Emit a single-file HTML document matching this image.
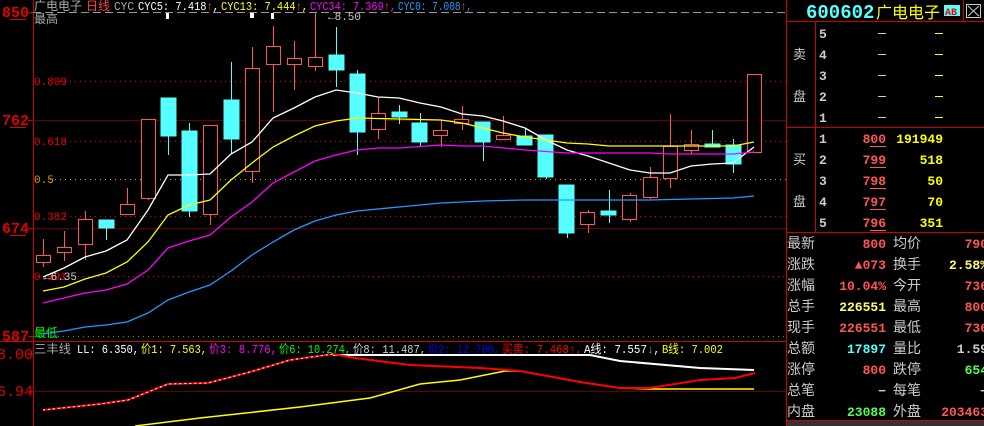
<!DOCTYPE html>
<html><head><meta charset="utf-8"><style>
html,body{margin:0;padding:0;background:#000;width:984px;height:426px;overflow:hidden}
svg{display:block}
text{font-family:"Liberation Mono","Noto Sans CJK SC",monospace;}
.cn{font-family:"Liberation Sans","Noto Sans CJK SC",sans-serif}
</style></head><body>
<svg width="984" height="426" viewBox="0 0 984 426" xmlns="http://www.w3.org/2000/svg">
<rect width="984" height="426" fill="#000"/>
<line x1="33.5" y1="0" x2="33.5" y2="426" stroke="#c00"/>
<line x1="786.5" y1="0" x2="786.5" y2="426" stroke="#c00"/>
<line x1="33" y1="12.5" x2="786" y2="12.5" stroke="#999" stroke-dasharray="8,4"/>
<line x1="33" y1="120.5" x2="786" y2="120.5" stroke="#600"/>
<line x1="33" y1="228.5" x2="786" y2="228.5" stroke="#600"/>
<line x1="33" y1="336.5" x2="786" y2="336.5" stroke="#0c0" stroke-dasharray="1,4"/>
<line x1="0" y1="341.5" x2="786" y2="341.5" stroke="#c00"/>
<line x1="33" y1="391.5" x2="786" y2="391.5" stroke="#600"/>
<g stroke-dasharray="1,4">
<line x1="60" y1="81.5" x2="786" y2="81.5" stroke="#e00"/>
<line x1="65" y1="141.5" x2="786" y2="141.5" stroke="#e00"/>
<line x1="50" y1="179.5" x2="786" y2="179.5" stroke="#e90"/>
<line x1="65" y1="216.5" x2="786" y2="216.5" stroke="#e00"/>
<line x1="33" y1="276.5" x2="786" y2="276.5" stroke="#e00"/>
</g>
<g fill="#e00" font-size="11">
<text x="34" y="85">0.809</text><text x="34" y="145">0.618</text>
<text x="34" y="183" fill="#e90">0.5</text><text x="34" y="220">0.382</text><text x="34" y="280">0.191</text>
</g>
<text x="44" y="280" fill="#ccc" font-size="11">←6.35</text>
<text x="328" y="20" fill="#ccc" font-size="11">←8.50</text>
<g stroke="#c00"><line x1="28" y1="12.5" x2="33" y2="12.5"/><line x1="28" y1="120.5" x2="33" y2="120.5"/><line x1="28" y1="228.5" x2="33" y2="228.5"/><line x1="28" y1="336.5" x2="33" y2="336.5"/><line x1="28" y1="354.5" x2="33" y2="354.5"/><line x1="28" y1="391.5" x2="33" y2="391.5"/></g>
<g fill="#d00" font-size="15" font-weight="bold" font-family="Liberation Sans">
<text x="2" y="17">850</text><text x="2" y="125">762</text><text x="2" y="233">674</text><text x="2" y="341">587</text>
<text x="-3" y="359" font-weight="normal">8.00</text><text x="-3" y="396" font-weight="normal">6.94</text>
</g>
<g stroke="#d00"><line x1="10" y1="19.5" x2="26" y2="19.5"/><line x1="10" y1="127.5" x2="26" y2="127.5"/><line x1="10" y1="235.5" x2="26" y2="235.5"/></g>
<text x="34" y="23" class="cn" fill="#aaa" font-size="12">最高</text>
<text x="34" y="337" class="cn" fill="#0f0" font-size="12">最低</text>
<g font-size="12">
<text x="34" y="10" class="cn" fill="#aaa">广电电子</text>
<text x="86" y="10" class="cn" fill="#f44">日线</text>
<text x="114" y="10" fill="#aaa" textLength="20" lengthAdjust="spacingAndGlyphs">CYC</text>
<text x="138" y="10" fill="#fff" textLength="81" lengthAdjust="spacingAndGlyphs">CYC5: 7.418<tspan fill="#f44">↑</tspan>,</text>
<text x="221" y="10" fill="#ff0" textLength="87" lengthAdjust="spacingAndGlyphs">CYC13: 7.444<tspan fill="#f44">↑</tspan>,</text>
<text x="310" y="10" fill="#f0f" textLength="86" lengthAdjust="spacingAndGlyphs">CYC34: 7.369<tspan fill="#f44">↑</tspan>,</text>
<text x="398" y="10" fill="#29f" textLength="74" lengthAdjust="spacingAndGlyphs">CYC0: 7.008<tspan fill="#f44">↑</tspan>,</text>
</g>
<g fill="#fff"><rect x="166" y="13" width="3" height="6"/><rect x="250" y="13" width="4" height="5"/><rect x="271" y="13" width="3" height="6"/></g>
<g stroke="#f55" fill="none">
<line x1="43.5" y1="239" x2="43.5" y2="267"/><rect x="36.5" y="255.5" width="14" height="7" fill="#000"/>
<line x1="64.5" y1="231" x2="64.5" y2="261"/><rect x="57.5" y="247.5" width="14" height="5" fill="#000"/>
<line x1="85.5" y1="211" x2="85.5" y2="260"/><rect x="78.5" y="219.5" width="14" height="25" fill="#000"/>
<line x1="127.5" y1="188" x2="127.5" y2="214"/><rect x="120.5" y="204.5" width="14" height="10" fill="#000"/>
<line x1="148.5" y1="119" x2="148.5" y2="200"/><rect x="141.5" y="119.5" width="14" height="79" fill="#000"/>
<line x1="210.5" y1="125" x2="210.5" y2="225"/><rect x="203.5" y="125.5" width="14" height="89" fill="#000"/>
<line x1="252.5" y1="47" x2="252.5" y2="183"/><rect x="245.5" y="68.5" width="14" height="103" fill="#000"/>
<line x1="273.5" y1="26" x2="273.5" y2="112"/><rect x="266.5" y="46.5" width="14" height="18" fill="#000"/>
<line x1="294.5" y1="41" x2="294.5" y2="90"/><rect x="287.5" y="58.5" width="14" height="6" fill="#000"/>
<line x1="315.5" y1="13" x2="315.5" y2="71"/><rect x="308.5" y="57.5" width="14" height="9" fill="#000"/>
<line x1="378.5" y1="97" x2="378.5" y2="139"/><rect x="371.5" y="113.5" width="14" height="16" fill="#000"/>
<line x1="441.5" y1="120" x2="441.5" y2="147"/><rect x="433.5" y="130.5" width="14" height="5" fill="#000"/>
<line x1="462.5" y1="106" x2="462.5" y2="130"/><rect x="454.5" y="119.5" width="14" height="4" fill="#000"/>
<line x1="503.5" y1="116" x2="503.5" y2="140"/><rect x="496.5" y="135.5" width="14" height="4" fill="#000"/>
<line x1="588.5" y1="210" x2="588.5" y2="233"/><rect x="580.5" y="212.5" width="14" height="12" fill="#000"/>
<line x1="630.5" y1="193" x2="630.5" y2="222"/><rect x="622.5" y="195.5" width="14" height="24" fill="#000"/>
<line x1="650.5" y1="167" x2="650.5" y2="199"/><rect x="643.5" y="177.5" width="14" height="20" fill="#000"/>
<line x1="670.5" y1="114" x2="670.5" y2="188"/><rect x="663.5" y="146.5" width="14" height="32" fill="#000"/>
<line x1="691.5" y1="130" x2="691.5" y2="154"/><rect x="684.5" y="144.5" width="14" height="6" fill="#000"/>
<rect x="747.5" y="74.5" width="14" height="78" fill="#000"/>
</g>
<g stroke="#5ff" fill="#5ff">
<line x1="106.5" y1="220" x2="106.5" y2="240"/><rect x="99" y="220" width="15" height="8"/>
<line x1="168.5" y1="98" x2="168.5" y2="155"/><rect x="161" y="98" width="15" height="38"/>
<line x1="189.5" y1="123" x2="189.5" y2="217"/><rect x="182" y="131" width="15" height="80"/>
<line x1="231.5" y1="62" x2="231.5" y2="153"/><rect x="224" y="100" width="15" height="39"/>
<line x1="336.5" y1="27" x2="336.5" y2="87"/><rect x="329" y="55" width="15" height="15"/>
<line x1="357.5" y1="70" x2="357.5" y2="155"/><rect x="350" y="74" width="15" height="58"/>
<line x1="399.5" y1="105" x2="399.5" y2="124"/><rect x="392" y="112" width="15" height="5"/>
<line x1="420.5" y1="113" x2="420.5" y2="146"/><rect x="412" y="123" width="15" height="19"/>
<line x1="483.5" y1="122" x2="483.5" y2="161"/><rect x="475" y="122" width="15" height="20"/>
<line x1="525.5" y1="129" x2="525.5" y2="145"/><rect x="517" y="136" width="15" height="9"/>
<line x1="546.5" y1="135" x2="546.5" y2="179"/><rect x="538" y="135" width="15" height="42"/>
<line x1="567.5" y1="185" x2="567.5" y2="238"/><rect x="559" y="185" width="15" height="48"/>
<line x1="609.5" y1="190" x2="609.5" y2="223"/><rect x="601" y="211" width="15" height="4"/>
<line x1="712.5" y1="130" x2="712.5" y2="146"/><rect x="705" y="144" width="15" height="3"/>
<line x1="733.5" y1="139" x2="733.5" y2="173"/><rect x="726" y="145" width="15" height="19"/>
</g>
<g fill="none" stroke-width="1.3">
<polyline stroke="#fff" points="43,277 64,268 85,257 106,251 127,240 148,210 168,175 189,175 210,174 231,154 252,142 273,118 294,108 315,97 336,90 357,93 378,97 399,98 420,103 441,107 462,114 483,116 503,121 525,128 546,140 567,150 588,156 609,163 630,170 650,173 670,173 691,166 712,164 733,163 754,147"/>
<polyline stroke="#ff0" points="43,291 64,287 85,279 106,273 127,262 148,242 168,215 189,205 210,200 231,180 252,163 273,147 294,136 315,126 336,121 357,118 399,119 441,120 462,123 483,128 503,133 525,137 546,140 567,143 588,144 609,146 650,146 691,146 733,146 754,142"/>
<polyline stroke="#f0f" points="43,303 64,298 85,293 106,290 127,284 148,270 168,248 189,241 210,235 231,217 252,202 273,183 294,172 315,161 336,155 357,150 378,148 399,148 441,145 462,146 483,146 525,150 567,153 609,153 650,153 670,154 691,154 733,154 754,152"/>
<polyline stroke="#29f" points="43,334 64,331 85,327 106,325 127,322 148,313 168,300 189,292 210,285 231,271 252,255 273,242 294,230 315,221 336,215 357,211 378,209 399,207 441,203 483,201 525,200 567,200 609,200 650,200 691,199 733,198 754,196"/>
</g>
<g font-size="12">
<text x="34" y="353" class="cn" fill="#aaa" textLength="37" lengthAdjust="spacingAndGlyphs">三丰线</text>
<text x="77" y="353" fill="#fff" textLength="62" lengthAdjust="spacingAndGlyphs">LL: 6.350,</text>
<text x="141" y="353" fill="#ff0" textLength="66" lengthAdjust="spacingAndGlyphs">价1: 7.563,</text>
<text x="209" y="353" fill="#f0f" textLength="68" lengthAdjust="spacingAndGlyphs">价3: 8.776,</text>
<text x="279" y="353" fill="#0f0" textLength="72" lengthAdjust="spacingAndGlyphs">价6: 10.274,</text>
<text x="353" y="353" fill="#ccc" textLength="73" lengthAdjust="spacingAndGlyphs">价8: 11.487,</text>
<text x="428" y="353" fill="#00f" textLength="72" lengthAdjust="spacingAndGlyphs">价2: 12.700,</text>
<text x="502" y="353" fill="#f00" textLength="80" lengthAdjust="spacingAndGlyphs">买卖: 7.468↑,</text>
<text x="584" y="353" fill="#fff" textLength="76" lengthAdjust="spacingAndGlyphs">A线: 7.557<tspan fill="#0f0">↓</tspan>,</text>
<text x="662" y="353" fill="#ff0" textLength="61" lengthAdjust="spacingAndGlyphs">B线: 7.002</text>
</g>
<g fill="none" stroke-width="2">
<polyline stroke="#fff" points="333,355 590,355 620,361 700,368 754,370"/>
<polyline stroke="#ff0" stroke-width="1.5" points="135,426 200,418 300,407 370,398 420,384 460,380 505,371 520,371 580,382 620,388 650,389 754,389"/>
<polyline stroke="#f00" points="43,410 100,404 128,400 168,384 208,383 250,372 290,360 333,354 355,358 410,365 480,368 520,371 580,382 620,388 650,388 700,380 735,378 755,373"/>
<polyline stroke="#fff" stroke-width="1" stroke-dasharray="2,3" points="43,410 100,404 128,400 168,384 208,383 250,372 290,360 333,354"/>
</g>
<g stroke="#c00" fill="none">
<line x1="786" y1="21.5" x2="984" y2="21.5"/>
<line x1="786" y1="127.5" x2="984" y2="127.5"/>
<line x1="786" y1="232.5" x2="984" y2="232.5"/>
<line x1="815.5" y1="21" x2="815.5" y2="232"/>
<line x1="963.5" y1="0" x2="963.5" y2="21"/>
<line x1="786" y1="420.5" x2="984" y2="420.5"/>
</g>
<rect x="787" y="421" width="197" height="5" fill="#333"/>
<text x="806" y="18" fill="#5ff" font-size="19" font-weight="bold" font-family="Liberation Sans">600602</text>
<text x="876" y="18" class="cn" fill="#ff0" font-size="16">广电电子</text>
<rect x="944" y="5" width="16" height="11" fill="#5ff"/><text x="945" y="15" fill="#f00" font-size="10" font-weight="bold" font-family="Liberation Sans">AB</text>
<rect x="966.5" y="4.5" width="14" height="13" fill="none" stroke="#ccc"/><path d="M968 6 L979 16 M979 6 L968 16" stroke="#ccc"/>
<g font-size="13" class="cn" fill="#ccc"><text x="793" y="59">卖</text><text x="793" y="101">盘</text><text x="793" y="164">买</text><text x="793" y="206">盘</text></g>
<g font-size="13" font-family="Liberation Sans" fill="#ccc" font-weight="bold">
<text x="819" y="38">5</text><text x="819" y="59">4</text><text x="819" y="80">3</text><text x="819" y="101">2</text><text x="819" y="122">1</text>
<text x="819" y="143">1</text><text x="819" y="164">2</text><text x="819" y="185">3</text><text x="819" y="206">4</text><text x="819" y="227">5</text>
</g>
<g stroke="#ccc"><line x1="878" y1="33.5" x2="886" y2="33.5"/><line x1="878" y1="54.5" x2="886" y2="54.5"/><line x1="878" y1="75.5" x2="886" y2="75.5"/><line x1="878" y1="96.5" x2="886" y2="96.5"/><line x1="878" y1="117.5" x2="886" y2="117.5"/></g>
<g stroke="#ff0"><line x1="935" y1="33.5" x2="943" y2="33.5"/><line x1="935" y1="54.5" x2="943" y2="54.5"/><line x1="935" y1="75.5" x2="943" y2="75.5"/><line x1="935" y1="96.5" x2="943" y2="96.5"/><line x1="935" y1="117.5" x2="943" y2="117.5"/></g>
<g font-size="13" font-family="Liberation Sans" font-weight="bold" text-anchor="end">
<g fill="#f55"><text x="886" y="143">800</text><text x="886" y="164">799</text><text x="886" y="185">798</text><text x="886" y="206">797</text><text x="886" y="227">796</text></g>
<g fill="#ff0"><text x="943" y="143">191949</text><text x="943" y="164">518</text><text x="943" y="185">50</text><text x="943" y="206">70</text><text x="943" y="227">351</text></g>
</g>
<g stroke="#f55"><line x1="870" y1="146.5" x2="886" y2="146.5"/><line x1="870" y1="167.5" x2="886" y2="167.5"/><line x1="870" y1="188.5" x2="886" y2="188.5"/><line x1="870" y1="209.5" x2="886" y2="209.5"/><line x1="870" y1="230.5" x2="886" y2="230.5"/></g>
<g font-size="14" class="cn" fill="#ccc">
<text x="787" y="248">最新</text><text x="787" y="269">涨跌</text><text x="787" y="290">涨幅</text><text x="787" y="311">总手</text><text x="787" y="332">现手</text><text x="787" y="353">总额</text><text x="787" y="374">涨停</text><text x="787" y="395">总笔</text><text x="787" y="416">内盘</text>
<text x="893" y="248">均价</text><text x="893" y="269">换手</text><text x="893" y="290">今开</text><text x="893" y="311">最高</text><text x="893" y="332">最低</text><text x="893" y="353">量比</text><text x="893" y="374">跌停</text><text x="893" y="395">每笔</text><text x="893" y="416">外盘</text>
</g>
<g font-size="13" font-family="Liberation Sans" font-weight="bold" text-anchor="end">
<text x="886" y="248" fill="#f55">800</text><text x="886" y="269" fill="#f55">▲073</text><text x="886" y="290" fill="#f55">10.04%</text><text x="886" y="311" fill="#ff6">226551</text><text x="886" y="332" fill="#f55">226551</text><text x="886" y="353" fill="#5ff">17897</text><text x="886" y="374" fill="#f55">800</text><text x="886" y="395" fill="#ccc">−</text><text x="886" y="416" fill="#5f5">23088</text>
<text x="988" y="248" fill="#f55">790</text><text x="988" y="269" fill="#ff6">2.58%</text><text x="988" y="290" fill="#f55">736</text><text x="988" y="311" fill="#f55">800</text><text x="988" y="332" fill="#f55">736</text><text x="988" y="353" fill="#ccc">1.59</text><text x="988" y="374" fill="#5f5">654</text><text x="988" y="395" fill="#ccc">−</text><text x="988" y="416" fill="#f55">203463</text>
</g>
</svg>
</body></html>
